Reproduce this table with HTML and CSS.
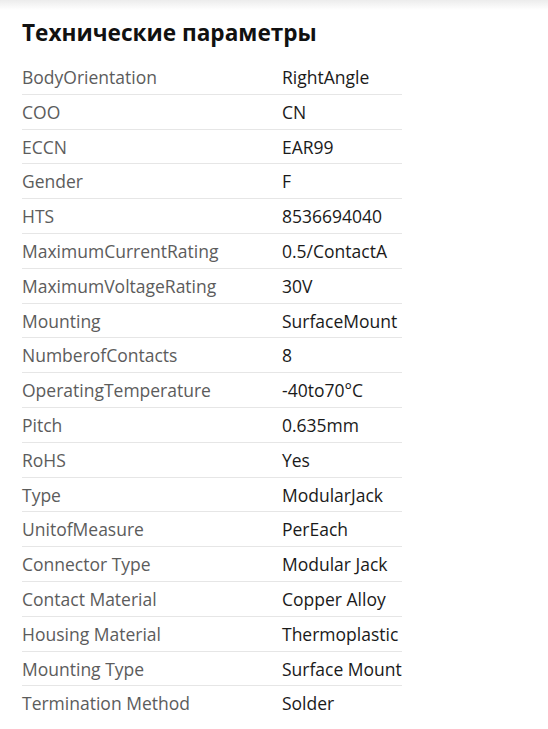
FILE: index.html
```html
<!DOCTYPE html>
<html lang="ru">
<head>
<meta charset="utf-8">
<link rel="stylesheet" href="styles.css">
</head>
<body>
<div class="topshade"></div>
<section class="specs">
  <h2 class="specs-title">Технические параметры</h2>
  <table class="specs-table">
    <tbody>
      <tr><td class="k">BodyOrientation</td><td class="v">RightAngle</td></tr>
      <tr><td class="k">COO</td><td class="v">CN</td></tr>
      <tr><td class="k">ECCN</td><td class="v">EAR99</td></tr>
      <tr><td class="k">Gender</td><td class="v">F</td></tr>
      <tr><td class="k">HTS</td><td class="v">8536694040</td></tr>
      <tr><td class="k">MaximumCurrentRating</td><td class="v">0.5/ContactA</td></tr>
      <tr><td class="k">MaximumVoltageRating</td><td class="v">30V</td></tr>
      <tr><td class="k">Mounting</td><td class="v">SurfaceMount</td></tr>
      <tr><td class="k">NumberofContacts</td><td class="v">8</td></tr>
      <tr><td class="k">OperatingTemperature</td><td class="v">-40to70°C</td></tr>
      <tr><td class="k">Pitch</td><td class="v">0.635mm</td></tr>
      <tr><td class="k">RoHS</td><td class="v">Yes</td></tr>
      <tr><td class="k">Type</td><td class="v">ModularJack</td></tr>
      <tr><td class="k">UnitofMeasure</td><td class="v">PerEach</td></tr>
      <tr><td class="k">Connector Type</td><td class="v">Modular Jack</td></tr>
      <tr><td class="k">Contact Material</td><td class="v">Copper Alloy</td></tr>
      <tr><td class="k">Housing Material</td><td class="v">Thermoplastic</td></tr>
      <tr><td class="k">Mounting Type</td><td class="v">Surface Mount</td></tr>
      <tr><td class="k">Termination Method</td><td class="v">Solder</td></tr>
    </tbody>
  </table>
</section>
</body>
</html>
```
FILE: styles.css
```css
html, body {
  margin: 0;
  padding: 0;
  background: #fff;
  font-family: "Open Sans", "Liberation Sans", sans-serif;
}
.topshade {
  height: 10px;
  background: linear-gradient(to bottom, #ececec, #ffffff);
}
.specs {
  padding: 0 22px;
}
.specs-title {
  margin: 8px 0 0;
  font-size: 22.6px;
  font-weight: 700;
  line-height: 30px;
  color: #111;
}
.specs-table {
  margin-top: 12px;
  width: 380px;
  border-collapse: collapse;
  font-size: 17.5px;
  line-height: 23.8px;
}
.specs-table td {
  padding: 6px 0 4px;
  border-bottom: 1px solid #e6e6e6;
  vertical-align: top;
  white-space: nowrap;
}
.specs-table tr:last-child td {
  border-bottom: none;
}
.specs-table .k {
  width: 260px;
  color: #5c5c5c;
}
.specs-table .v {
  color: #1a1a1a;
}
```
